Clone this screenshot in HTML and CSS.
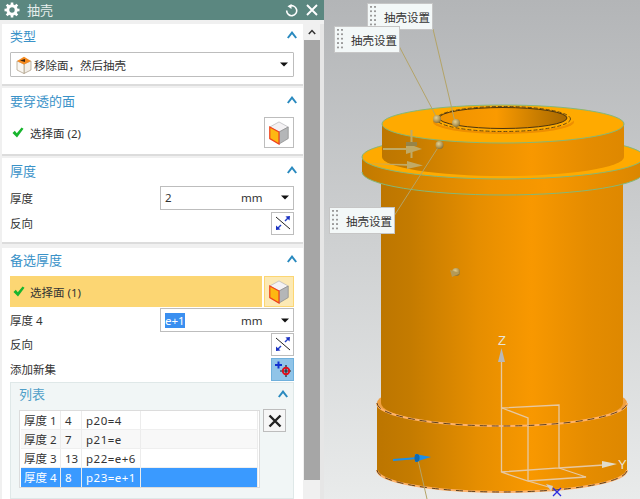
FILE: index.html
```html
<!DOCTYPE html>
<html lang="zh">
<head>
<meta charset="utf-8">
<title>抽壳</title>
<link rel="stylesheet" href="styles.css">
</head>
<body>
<svg class="defs" width="0" height="0" aria-hidden="true">
  <defs>
    <symbol id="chev" viewBox="0 0 10 8"><polyline points="0.8,7 5,1.6 9.2,7" fill="none" stroke="#2a8abf" stroke-width="2"/></symbol>
    <symbol id="caret" viewBox="0 0 8 5"><polygon points="0,0.5 8,0.5 4,4.5" fill="#111"/></symbol>
    <symbol id="check" viewBox="0 0 12 11"><path d="M0.5 6 L2.8 3.8 L4.8 6.2 L9.6 0.5 L11.5 1.8 L5 10.5 Z" fill="#18b52e"/></symbol>
    <symbol id="cube" viewBox="0 0 22 26">
      <polygon points="11,1 21,6.500 11,12 1,6.500" fill="#f4f2f4" stroke="#b8b8bc" stroke-width="0.8"/>
      <polygon points="11,12 21,6.500 21,19 11,25" fill="#b4b6b8" stroke="#8a8a8a" stroke-width="0.8"/>
      <polygon points="11,12 1,6.500 1,19 11,25" fill="#fdb812" stroke="#f0401c" stroke-width="1.300"/>
    </symbol>
    <symbol id="flip" viewBox="0 0 16 16">
      <line x1="1" y1="2" x2="15" y2="14" stroke="#222" stroke-width="1"/>
      <line x1="2.500" y1="13.500" x2="6" y2="10" stroke="#2140c8" stroke-width="1.500"/>
      <line x1="10" y1="6" x2="13.500" y2="2.500" stroke="#2140c8" stroke-width="1.500"/>
      <polygon points="10.500,1.500 15,1 14.500,5.500" fill="#1a30c0"/>
      <polygon points="1,10.500 5.500,14.500 1,15" fill="#1a30c0"/>
    </symbol>
  </defs>
</svg>

<div class="dialog">
  <header class="titlebar">
    <svg class="gear" viewBox="0 0 16 16" width="16" height="16"><circle cx="8" cy="8" r="4.200" fill="none" stroke="#fff" stroke-width="3"/><g stroke="#fff" stroke-width="2.600"><line x1="8" y1="0.500" x2="8" y2="3"/><line x1="8" y1="13" x2="8" y2="15.500"/><line x1="0.500" y1="8" x2="3" y2="8"/><line x1="13" y1="8" x2="15.500" y2="8"/><line x1="2.700" y1="2.700" x2="4.500" y2="4.500"/><line x1="11.500" y1="11.500" x2="13.300" y2="13.300"/><line x1="2.700" y1="13.300" x2="4.500" y2="11.500"/><line x1="11.500" y1="4.500" x2="13.300" y2="2.700"/></g></svg>
    <span class="title">抽壳</span>
    <svg class="reset" viewBox="0 0 13 13" width="13" height="13"><path d="M4.500 2.200 A5 5 0 1 1 1.700 6.500" fill="none" stroke="#fff" stroke-width="1.600"/><polygon points="6.500,0 6.500,5 2.500,2.200" fill="#fff"/></svg>
    <svg class="close" viewBox="0 0 12 12" width="12" height="12"><path d="M1 1 L11 11 M11 1 L1 11" stroke="#fff" stroke-width="1.900"/></svg>
  </header>

  <div class="dialog-body">
    <main class="panel">
      <section class="group group-type">
        <div class="group-head"><h2>类型</h2><svg class="chev"><use href="#chev"/></svg></div>
        <div class="combo">
          <svg class="combo-icon" viewBox="0 0 16 18" width="16" height="18"><polygon points="8,8 15,5 15,14 8,17.500" fill="#f2eee8" stroke="#a89880" stroke-width="0.700"/><polygon points="8,8 1,5 1,14 8,17.500" fill="#faf7f2" stroke="#a89880" stroke-width="0.700"/><polygon points="8,0.800 15,5 8,8.500 1,5" fill="#f58a1f"/><polygon points="4,4.500 9,3 9,6" fill="#3a2410"/></svg>
          <span class="combo-text">移除面，然后抽壳</span>
          <svg class="caret"><use href="#caret"/></svg>
        </div>
      </section>

      <section class="group group-face">
        <div class="group-head"><h2>要穿透的面</h2><svg class="chev"><use href="#chev"/></svg></div>
        <div class="select-row">
          <svg class="check"><use href="#check"/></svg>
          <span class="select-text">选择面 (2)</span>
          <span class="cube-btn"><svg class="cube"><use href="#cube"/></svg></span>
        </div>
      </section>

      <section class="group group-thick">
        <div class="group-head"><h2>厚度</h2><svg class="chev"><use href="#chev"/></svg></div>
        <div class="field-row">
          <span class="field-label">厚度</span>
          <div class="unit-field"><span class="value">2</span><span class="unit">mm</span><svg class="caret"><use href="#caret"/></svg></div>
        </div>
        <div class="btn-row">
          <span class="field-label">反向</span>
          <span class="tool-btn"><svg class="flip"><use href="#flip"/></svg></span>
        </div>
      </section>

      <section class="group group-alt">
        <div class="group-head"><h2>备选厚度</h2><svg class="chev"><use href="#chev"/></svg></div>
        <div class="select-row active">
          <div class="select-bar">
            <svg class="check"><use href="#check"/></svg>
            <span class="select-text">选择面 (1)</span>
          </div>
          <span class="cube-btn"><svg class="cube"><use href="#cube"/></svg></span>
        </div>
        <div class="field-row tight">
          <span class="field-label">厚度 4</span>
          <div class="unit-field"><span class="value"><span class="selected">e+1</span></span><span class="unit">mm</span><svg class="caret"><use href="#caret"/></svg></div>
        </div>
        <div class="btn-row first">
          <span class="field-label">反向</span>
          <span class="tool-btn"><svg class="flip"><use href="#flip"/></svg></span>
        </div>
        <div class="btn-row">
          <span class="field-label">添加新集</span>
          <span class="tool-btn tool-on">
            <svg viewBox="0 0 18 18" width="18" height="18"><path d="M1 5 H8 M4.500 1.500 V8.500" stroke="#1230d0" stroke-width="2"/><path d="M6 11 H17 M12 5 V17" stroke="#222" stroke-width="1.200"/><circle cx="12" cy="11" r="3.200" fill="none" stroke="#e0101c" stroke-width="2"/></svg>
          </span>
        </div>

        <div class="subgroup">
          <div class="sub-head"><h3>列表</h3><svg class="chev"><use href="#chev"/></svg></div>
          <div class="list-wrap">
            <div class="list">
              <div class="row"><span>厚度 1</span><span>4</span><span>p20=4</span><span></span></div>
              <div class="row alt"><span>厚度 2</span><span>7</span><span>p21=e</span><span></span></div>
              <div class="row"><span>厚度 3</span><span>13</span><span>p22=e+6</span><span></span></div>
              <div class="row current"><span>厚度 4</span><span>8</span><span>p23=e+1</span><span></span></div>
            </div>
            <span class="delete-btn"><svg viewBox="0 0 14 14" width="14" height="14"><path d="M1.500 1.500 L12.500 12.500 M12.500 1.500 L1.500 12.500" stroke="#222" stroke-width="2.400"/></svg></span>
          </div>
        </div>
      </section>
    </main>

    <aside class="scrollbar">
      <div class="scroll-up"><svg viewBox="0 0 8 6" width="8" height="6"><polyline points="0.800,5 4,1.500 7.200,5" fill="none" stroke="#333" stroke-width="1.500"/></svg></div>
      <div class="scroll-thumb"></div>
    </aside>
    <div class="strip"></div>
  </div>
</div>

<div class="viewport">
  <svg class="scene" viewBox="324 0 316 499" width="316" height="499">
    <defs>
      <linearGradient id="bg" x1="0" y1="0" x2="0" y2="1">
        <stop offset="0" stop-color="#b3b5b7"/><stop offset="0.5" stop-color="#cfd1d2"/><stop offset="1" stop-color="#e9ebeb"/>
      </linearGradient>
      <linearGradient id="body" gradientUnits="userSpaceOnUse" x1="381" y1="0" x2="624" y2="0">
        <stop offset="0" stop-color="#bd7600"/><stop offset="0.12" stop-color="#c47b00"/><stop offset="0.4" stop-color="#e68e00"/><stop offset="0.62" stop-color="#f89800"/><stop offset="0.85" stop-color="#e58c00"/><stop offset="1" stop-color="#de8800"/>
      </linearGradient>
      <linearGradient id="flange" gradientUnits="userSpaceOnUse" x1="362" y1="0" x2="644" y2="0">
        <stop offset="0" stop-color="#c27a00"/><stop offset="0.45" stop-color="#ef9300"/><stop offset="0.65" stop-color="#f89800"/><stop offset="1" stop-color="#da8600"/>
      </linearGradient>
      <linearGradient id="hole" gradientUnits="userSpaceOnUse" x1="439" y1="0" x2="567" y2="0">
        <stop offset="0" stop-color="#ee9200"/><stop offset="0.45" stop-color="#fa9a00"/><stop offset="0.8" stop-color="#c47a00"/><stop offset="1" stop-color="#a86800"/>
      </linearGradient>
      <radialGradient id="ball" cx="0.4" cy="0.35" r="0.7">
        <stop offset="0" stop-color="#e2cf94"/><stop offset="0.6" stop-color="#b49a58"/><stop offset="1" stop-color="#7f6c38"/>
      </radialGradient>
    </defs>
    <rect x="324" y="0" width="316" height="499" fill="url(#bg)"/>

    <!-- lower ring -->
    <path d="M377 403 L377 470 A125 22 0 0 0 627 470 L627 403 Z" fill="url(#body)"/>
    <ellipse cx="502" cy="403" rx="125" ry="23" fill="#f0a040"/>
    <path d="M377 470 A125 22 0 0 0 627 470" fill="none" stroke="#ffb36a" stroke-width="2"/>
    <path d="M377 470 A125 22 0 0 0 627 470" fill="none" stroke="#5a4020" stroke-width="1" stroke-dasharray="7 5"/>

    <!-- main body -->
    <path d="M381 150 L381 403 A121 23 0 0 0 623 403 L623 150 Z" fill="url(#body)"/>
    <path d="M377 403 A125 23 0 0 0 627 403" fill="none" stroke="#ffb36a" stroke-width="2"/>
    <path d="M377 403 A125 23 0 0 0 627 403" fill="none" stroke="#5a4020" stroke-width="1" stroke-dasharray="7 5"/>

    <!-- flange -->
    <path d="M362 157 L362 172 A141 23 0 0 0 644 172 L644 157 Z" fill="url(#flange)"/>
    <path d="M362 172 A141 23 0 0 0 644 172" fill="none" stroke="#84b878" stroke-width="1"/>
    <ellipse cx="503" cy="157" rx="141" ry="22" fill="#ffaa00" stroke="#84b878" stroke-width="1"/>

    <!-- upper cylinder -->
    <path d="M382 124 L382 157 A121 19 0 0 0 624 157 L624 124 Z" fill="url(#body)"/>
    <ellipse cx="503" cy="124" rx="121" ry="19" fill="#ffaa00" stroke="#84b878" stroke-width="1"/>

    <!-- bore -->
    <ellipse cx="503.500" cy="122" rx="70.500" ry="12" fill="#ee8f00"/>
    <ellipse cx="503.500" cy="119" rx="70.500" ry="13" fill="#ffaa00"/>
    <ellipse cx="503.500" cy="119" rx="67" ry="12.500" fill="none" stroke="#6a4a10" stroke-width="1" stroke-dasharray="4 2"/>
    <ellipse cx="503" cy="118" rx="64" ry="10.500" fill="url(#hole)" stroke="#4a3410" stroke-width="1"/>

    <!-- leaders -->
    <g stroke="#b4a468" stroke-width="1" fill="none">
      <line x1="433" y1="29" x2="455" y2="122"/>
      <line x1="399" y1="46" x2="437" y2="118"/>
      <line x1="394" y1="216" x2="439" y2="146"/>
      <line x1="418" y1="460" x2="427" y2="499"/>
    </g>

    <!-- arrows -->
    <g fill="#c0aa66" stroke="none">
      <rect x="383" y="148" width="32" height="2"/>
      <polygon points="406,143 422,149 406,154"/>
      <polygon points="366,163.500 410,164 410,166"/>
      <polygon points="407,161 423,165.500 407,169"/>
      <rect x="410.500" y="130" width="2" height="28"/>
      <rect x="406" y="142" width="11" height="4" fill="#968448"/>
    </g>
    <circle cx="437" cy="119" r="4" fill="url(#ball)"/>
    <circle cx="456" cy="123" r="4" fill="url(#ball)"/>
    <circle cx="439.500" cy="145" r="4" fill="url(#ball)"/>
    <circle cx="456" cy="272" r="4" fill="url(#ball)"/>
    <polygon points="460,273 450,270 452,277" fill="#b49a58"/>

    <!-- blue arrow -->
    <line x1="393" y1="460" x2="418" y2="458" stroke="#1c8fe8" stroke-width="2"/>
    <polygon points="415,454 431,457 415,462" fill="#1c8fe8"/>
    <ellipse cx="417" cy="458" rx="2.500" ry="4" fill="#0e6ab4"/>

    <!-- csys -->
    <g stroke="#e6c8a2" stroke-width="1.300" fill="none">
      <line x1="501.500" y1="360" x2="501.500" y2="472"/>
      <polyline points="502,408 559,405 559,468 501,472 528,481 586,477 559,468"/>
      <polyline points="502,408 528,418 528,481"/>
      <line x1="559" y1="468" x2="604" y2="465"/>
      <line x1="528" y1="481" x2="552" y2="488"/>
    </g>
    <polygon points="501.500,348 498,362 505,362" fill="#b8b8b8"/>
    <polygon points="602,461 617,464 602,468" fill="#e0dccc"/>
    <polygon points="546,484 553,486 551,491" fill="#cfcfcf"/>
    <path d="M553 488 L561 496 M561 488 L553 496" stroke="#2a2ae0" stroke-width="1.300"/>
    <text x="498" y="345" class="axis">Z</text>
    <text x="618" y="469" class="axis">Y</text>
  </svg>
  <div class="tag tag-top"><i class="grip"></i><span>抽壳设置</span></div>
  <div class="tag tag-left"><i class="grip"></i><span>抽壳设置</span></div>
  <div class="tag tag-low"><i class="grip"></i><span>抽壳设置</span></div>
</div>
</body>
</html>
```
FILE: styles.css
```css
* { box-sizing: border-box; }
html, body { margin: 0; padding: 0; }
body {
  width: 640px;
  height: 499px;
  overflow: hidden;
  display: flex;
  font-family: "Noto Sans", "Noto Sans CJK SC", sans-serif;
  font-size: 11.5px;
  color: #333;
  background: #f0f0f0;
}
.defs { position: absolute; }
h2, h3 { margin: 0; font-weight: 400; }

.dialog { width: 324px; height: 499px; display: flex; flex-direction: column; flex: none; }
.titlebar {
  height: 20px;
  flex: none;
  background: #5b8780;
  display: flex;
  align-items: center;
  color: #e6eeec;
  padding-left: 4px;
}
.title { margin-left: 7px; font-size: 13px; padding-bottom: 1px; }
.reset { margin-left: auto; }
.close { margin-left: 8px; margin-right: 6px; }

.dialog-body { flex: 1; display: flex; padding-top: 4px; min-height: 0; }
.panel { width: 304px; padding-left: 2px; display: flex; flex-direction: column; flex: none; }
.scrollbar { width: 16px; flex: none; display: flex; flex-direction: column; }
.scroll-up { height: 16px; display: flex; align-items: center; justify-content: center; }
.scroll-thumb { height: 440px; background: #a6a6a6; }
.strip { width: 4px; background: #e6e6e6; }

.group { background: #fff; padding: 0 9px 0 8px; border-bottom: 2px solid #dcdcdc; margin-right: 1px; flex: none; }
.group-type { height: 62px; margin-bottom: 2px; }
.group-face { height: 68px; margin-bottom: 2px; }
.group-thick { height: 86px; margin-bottom: 4px; }
.group-alt { flex: 1; border-bottom: 0; }

.group-head { height: 24px; display: flex; align-items: center; justify-content: space-between; margin-right: -3px; }
.group-head h2 { font-size: 13px; color: #3a92c8; }
.chev { width: 10px; height: 8px; flex: none; }
.group-type .group-head, .group-alt .group-head { height: 22px; }

.combo {
  margin-top: 6px;
  height: 25px;
  border: 1px solid #bdbdbd;
  border-radius: 1px;
  display: flex;
  align-items: center;
  padding: 0 5px 0 5px;
}
.combo-text { margin-left: 2px; }
.caret { width: 8px; height: 5px; margin-left: auto; flex: none; }

.select-row { display: flex; align-items: center; height: 31px; margin-top: 5px; }
.select-row .check { margin-left: 2px; }
.check { width: 12px; height: 11px; flex: none; }
.select-text { margin-left: 6px; }
.cube-btn {
  margin-left: auto;
  width: 30px;
  height: 31px;
  border: 1px solid #bdbdbd;
  display: flex;
  align-items: center;
  justify-content: center;
  flex: none;
}
.cube { width: 22px; height: 24px; }

.select-row.active { margin-top: 6px; }
.select-bar {
  width: 252px;
  height: 31px;
  background: #fcd673;
  display: flex;
  align-items: center;
}
.select-bar .check { margin-left: 3px; }
.select-bar .select-text { margin-left: 5px; }
.select-row.active .cube-btn { background: #fce9b4; border-color: #fcd673; }

.field-row { display: flex; align-items: center; justify-content: space-between; height: 25px; margin-top: 3px; }
.field-row.tight { margin-top: 1px; height: 24px; }
.unit-field {
  width: 134px;
  height: 24px;
  border: 1px solid #bdbdbd;
  display: flex;
  align-items: center;
  padding: 0 4px 0 4px;
}
.value { width: 76px; }
.selected { background: #3a8ff0; color: #fff; }

.btn-row { display: flex; align-items: center; justify-content: space-between; height: 24px; margin-top: 1px; }
.btn-row.first { margin-top: 0; }
.tool-btn {
  width: 23px;
  height: 23px;
  border: 1px solid #bdbdbd;
  background: #fff;
  display: flex;
  align-items: center;
  justify-content: center;
}
.tool-on { background: #90c4e8; border-color: #6fb0dc; }
.flip { width: 16px; height: 16px; }

.subgroup {
  margin-top: 1px;
  height: 117px;
  background: #f1f6f6;
  border: 1px solid #dfe8e8;
  padding: 0 8px;
}
.sub-head { height: 21px; display: flex; align-items: center; justify-content: space-between; margin-right: -3px; }
.sub-head h3 { font-size: 13px; color: #4f9fc8; }
.list-wrap { display: flex; align-items: flex-start; gap: 3px; margin-top: 6px; }
.list {
  width: 241px;
  height: 78px;
  background: #fff;
  border: 1px solid #dcdcdc;
  padding: 0 1px;
  flex: none;
}
.row {
  height: 19px;
  display: grid;
  grid-template-columns: 40px 21px 59px 1fr;
  align-items: center;
  border-bottom: 1px solid #efefef;
  line-height: 19px;
}
.row span { padding-left: 3px; border-right: 1px solid #ececec; height: 100%; white-space: nowrap; overflow: hidden; }
.row span:nth-child(2) { padding-left: 4px; }
.row span:nth-child(3) { padding-left: 4px; letter-spacing: 0.5px; }
.row.alt { background: #f8f8f8; }
.row.current { background: #3a9aff; color: #fff; border-bottom: 0; }
.delete-btn {
  width: 23px;
  height: 23px;
  margin-top: -1px;
  border: 1px solid #bdbdbd;
  background: #f6f6f6;
  display: flex;
  align-items: center;
  justify-content: center;
  flex: none;
}

.viewport { position: relative; flex: 1; height: 499px; overflow: hidden; }
.scene { display: block; }
.axis { font-family: "Liberation Sans", sans-serif; font-size: 13px; fill: #e8e4d8; }

.tag {
  position: absolute;
  width: 66px;
  height: 27px;
  background: #f3f8f8;
  border: 1px solid #c6c6c6;
  display: flex;
  align-items: center;
  color: #333;
}
.tag span { margin-left: 16px; white-space: nowrap; }
.tag-top { left: 43px; top: 3px; }
.tag-left { left: 10px; top: 26px; }
.tag-low { left: 5px; top: 207px; }
.grip {
  position: absolute;
  left: 2px;
  top: 2px;
  width: 7px;
  height: 22px;
  background-image: radial-gradient(circle at 1px 1px, #9a9a9a 1px, transparent 1.200px);
  background-size: 4px 4.400px;
}
```
